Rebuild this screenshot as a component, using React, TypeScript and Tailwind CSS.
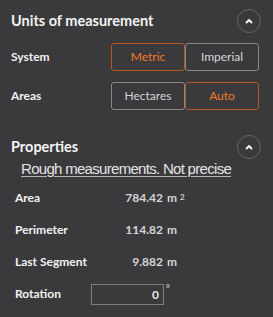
import React from 'react';

const Chevron = () => (
  <button className="w-[24px] h-[24px] rounded-full border border-[#666568] flex items-center justify-center">
    <svg width="10" height="10" viewBox="0 0 10 10">
      <polyline points="2.5,6.5 5,4 7.5,6.5" fill="none" stroke="#ffffff" strokeWidth="1.8" strokeLinecap="round" strokeLinejoin="round" />
    </svg>
  </button>
);

function Toggle({ options, active }: { options: string[]; active: string }) {
  return (
    <div className="flex">
      {options.map((o) => (
        <button
          key={o}
          className={`w-[74px] h-[28px] rounded-[3px] border text-[12px] ${
            o === active ? 'border-[#b9561c] text-[#f27b2c]' : 'border-[#88878a] text-[#d4d4da]'
          }`}
        >
          {o}
        </button>
      ))}
    </div>
  );
}

function StatRow({ label, value, unit, sup }: { label: string; value: string; unit: string; sup?: string }) {
  return (
    <div className="h-[32px] flex items-center">
      <span className="w-[100px] text-[12px] font-bold text-[#f2f2f2]">{label}</span>
      <span className="w-[48px] text-right text-[12px] font-bold text-[#d6d6d6]">{value}</span>
      <span className="ml-[4px] text-[12px] font-bold text-[#d6d6d6]">
        {unit}
        {sup && <sup className="ml-[3px] text-[8px] relative -top-[2px]">{sup}</sup>}
      </span>
    </div>
  );
}

export default function App() {
  return (
    <div className="w-[273px] h-[317px] bg-[#3a393b] overflow-hidden font-['Lato',sans-serif] select-none">
      <div className="pl-[11px] pr-[12px] pt-[9px]">
        <div className="h-[24px] flex items-center justify-between">
          <h2 className="text-[14.5px] font-bold text-[#f4f4f4]">Units of measurement</h2>
          <Chevron />
        </div>

        <div className="mt-[10px] h-[28px] flex items-center">
          <span className="w-[100px] text-[12px] font-bold text-[#f2f2f2]">System</span>
          <Toggle options={['Metric', 'Imperial']} active="Metric" />
        </div>
        <div className="mt-[11px] h-[28px] flex items-center">
          <span className="w-[100px] text-[12px] font-bold text-[#f2f2f2]">Areas</span>
          <Toggle options={['Hectares', 'Auto']} active="Auto" />
        </div>

        <div className="mt-[25px] h-[24px] flex items-center justify-between">
          <h2 className="text-[14.5px] font-bold text-[#f4f4f4]">Properties</h2>
          <Chevron />
        </div>
        <p className="ml-[10px] mt-[1px] whitespace-nowrap text-[15px] leading-[18px] tracking-[-0.7px] text-[#e4e4e4] underline decoration-[#b8b8b8] underline-offset-[2px] font-['Liberation_Sans',sans-serif]">
          Rough measurements. Not precise
        </p>

        <div className="pl-[4px] mt-[4px]">
          <StatRow label="Area" value="784.42" unit="m" sup="2" />
          <StatRow label="Perimeter" value="114.82" unit="m" />
          <StatRow label="Last Segment" value="9.882" unit="m" />
          <div className="h-[32px] flex items-center">
            <span className="w-[76px] text-[12px] font-bold text-[#f2f2f2]">Rotation</span>
            <input
              readOnly
              value="0"
              className="w-[73px] h-[21px] border border-[#7d7c7f] bg-transparent text-right pr-[4px] text-[12px] font-bold text-[#e6e6e6] outline-none"
            />
            <span className="ml-[2px] self-start mt-[4px] text-[9px] text-[#e6e6e6]">°</span>
          </div>
        </div>
      </div>
    </div>
  );
}
